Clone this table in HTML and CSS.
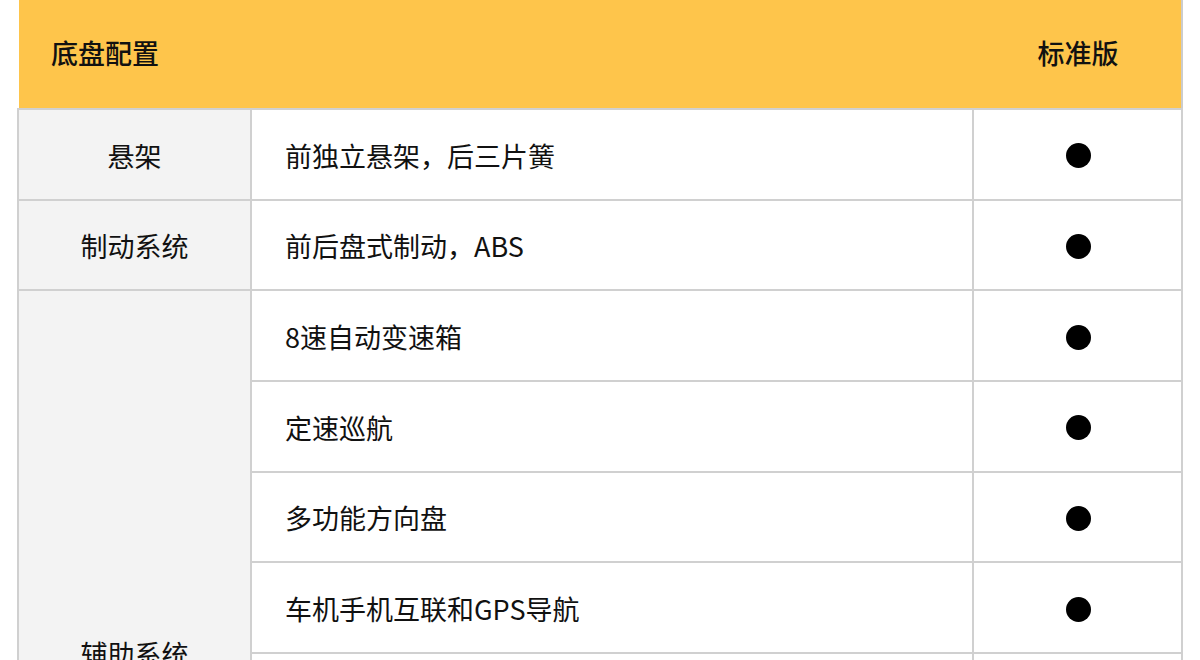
FILE: index.html
```html
<!DOCTYPE html>
<html lang="zh-CN">
<head>
<meta charset="utf-8">
<title>底盘配置</title>
<link rel="stylesheet" href="styles.css">
</head>
<body>
<div class="spec">
  <div class="spec-head">
    <span class="head-title">底盘配置</span>
    <span class="head-version">标准版</span>
  </div>
  <table class="spec-table">
    <colgroup>
      <col class="c-cat">
      <col class="c-item">
      <col class="c-val">
    </colgroup>
    <tbody>
      <tr>
        <td class="cat">悬架</td>
        <td class="item">前独立悬架，后三片簧</td>
        <td class="val"><span class="dot"></span></td>
      </tr>
      <tr>
        <td class="cat">制动系统</td>
        <td class="item">前后盘式制动，ABS</td>
        <td class="val"><span class="dot"></span></td>
      </tr>
      <tr>
        <td class="cat" rowspan="8">辅助系统</td>
        <td class="item">8速自动变速箱</td>
        <td class="val"><span class="dot"></span></td>
      </tr>
      <tr>
        <td class="item">定速巡航</td>
        <td class="val"><span class="dot"></span></td>
      </tr>
      <tr>
        <td class="item">多功能方向盘</td>
        <td class="val"><span class="dot"></span></td>
      </tr>
      <tr>
        <td class="item">车机手机互联和GPS导航</td>
        <td class="val"><span class="dot"></span></td>
      </tr>
      <tr>
        <td class="item">倒车雷达</td>
        <td class="val"><span class="dot"></span></td>
      </tr>
      <tr>
        <td class="item">倒车影像</td>
        <td class="val"><span class="dot"></span></td>
      </tr>
      <tr>
        <td class="item">胎压监测</td>
        <td class="val"><span class="dot"></span></td>
      </tr>
      <tr>
        <td class="item">上坡辅助</td>
        <td class="val"><span class="dot"></span></td>
      </tr>
    </tbody>
  </table>
</div>
</body>
</html>
```
FILE: styles.css
```css
html, body {
  margin: 0;
  padding: 0;
  background: #ffffff;
}

body {
  font-family: "Noto Sans CJK SC", "Noto Sans", sans-serif;
  color: #111111;
}

.spec {
  margin-left: 17px;
  width: 1166px;
}

.spec-head {
  margin-left: 2px;
  height: 108px;
  background: #fec54b;
  border-right: 2px solid #cccccc;
  display: flex;
  align-items: center;
  padding-left: 32px;
  box-sizing: border-box;
}

.head-title {
  font-size: 27px;
  font-weight: 500;
  flex: 1;
  position: relative;
  top: -2px;
}

.head-version {
  font-size: 27px;
  font-weight: 500;
  width: 206px;
  text-align: center;
  position: relative;
  top: -2px;
}

.spec-table {
  border-collapse: collapse;
  width: 1166px;
  table-layout: fixed;
}

.c-cat { width: 233px; }
.c-item { width: 722px; }
.c-val { width: 209px; }

.spec-table td {
  border: 2px solid #d0d0d0;
  height: 90.67px;
  padding: 2px 0 0;
  font-size: 27px;
  box-sizing: border-box;
  vertical-align: middle;
}

.spec-table td.cat {
  background: #f3f3f3;
  text-align: center;
}

.spec-table td.item {
  padding-left: 33px;
  text-align: left;
}

.spec-table td.val {
  text-align: center;
}

.dot {
  display: block;
  width: 25px;
  height: 25px;
  margin: 1px auto 0;
  border-radius: 50%;
  background: #000000;
  position: relative;
  left: 1px;
}
```
